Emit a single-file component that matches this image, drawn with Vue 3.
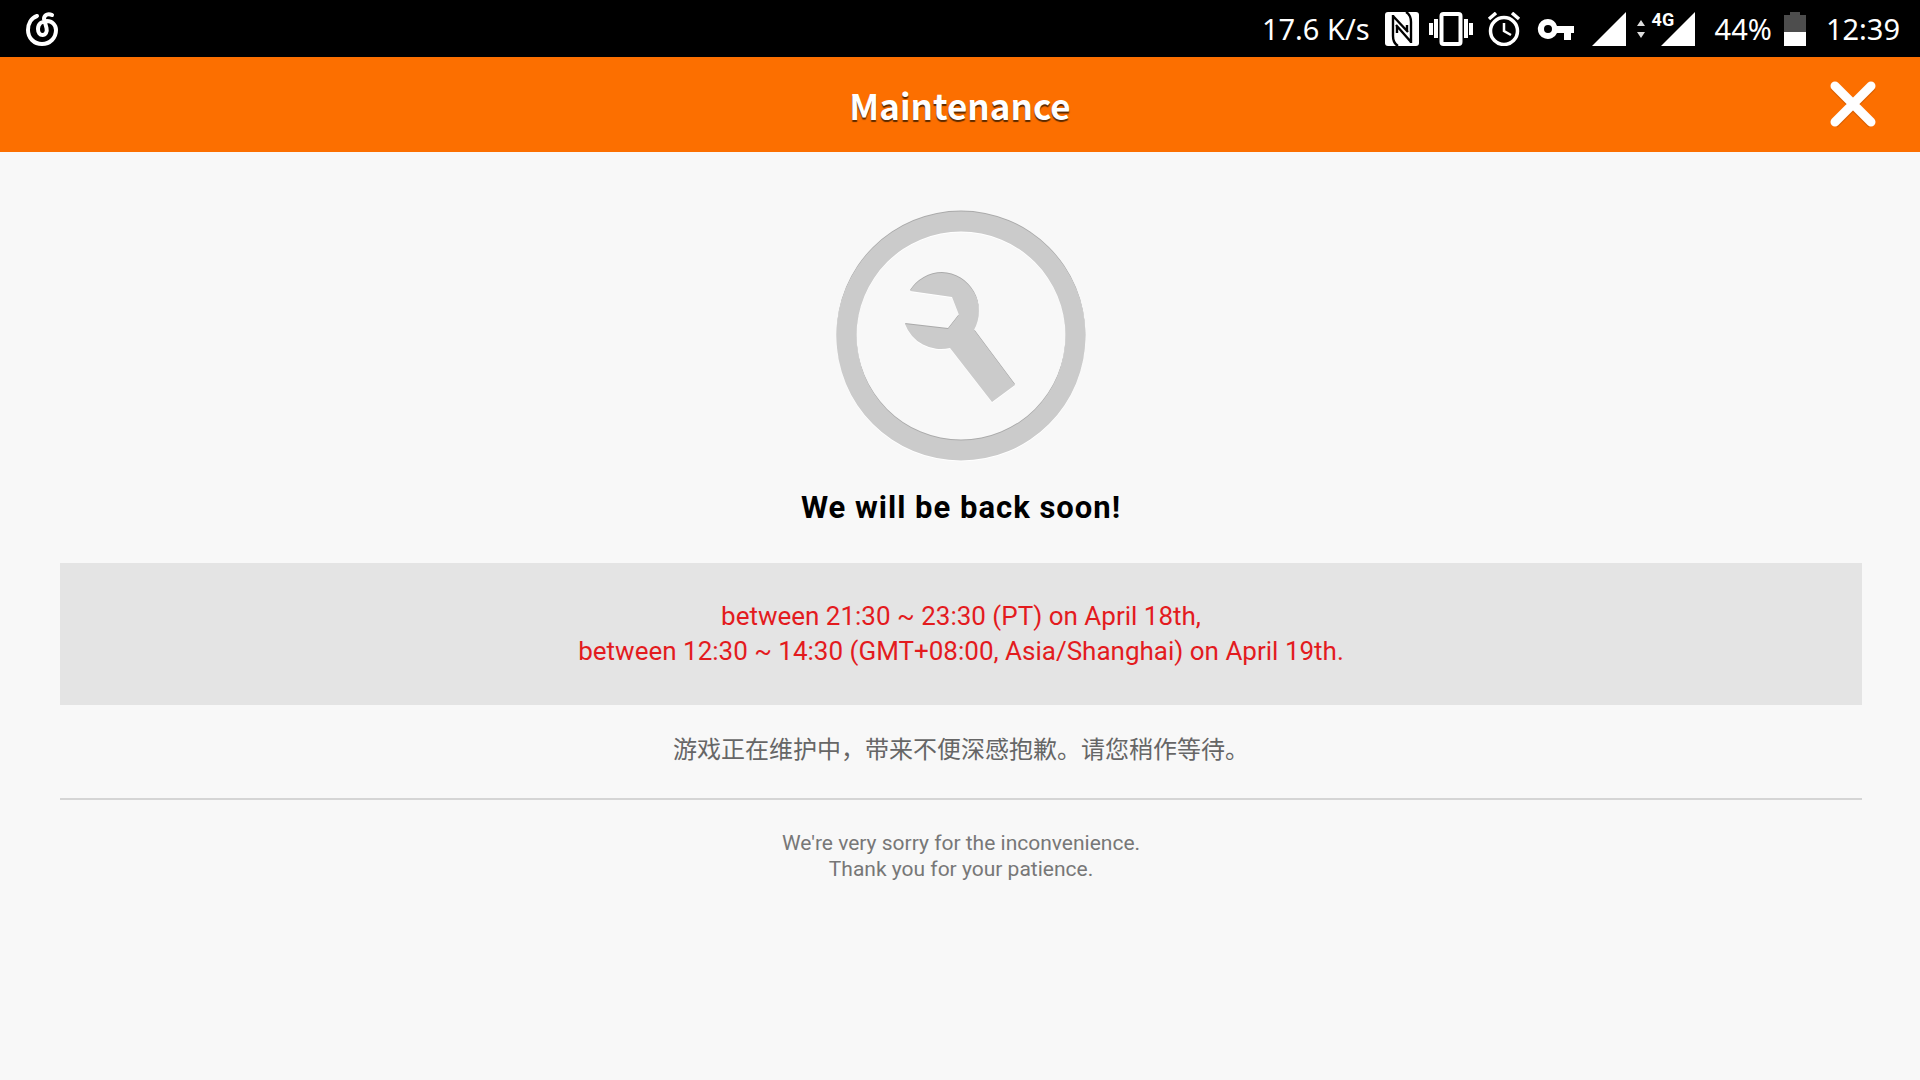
<script setup>
const notice = [
  'between 21:30 ~ 23:30 (PT) on April 18th,',
  'between 12:30 ~ 14:30 (GMT+08:00, Asia/Shanghai) on April 19th.',
]
</script>

<template>
  <div class="screen">
    <div class="status">
      <svg class="music" width="34" height="36" viewBox="0 0 34 36" fill="none" stroke="#fff" stroke-width="4" stroke-linecap="round">
        <path d="M11 5C5 7 2 13 2 19c0 8 6 14 14 14s14-6 14-14c0-5-4-9-9-9-5 0-9 3-9 8 0 4 2 6 4.500 6 3 0 5-3 4-7L18 8c0-4 4-6 8-4" />
      </svg>
      <div class="indicators">
        <span class="speed">17.6 K/s</span>
        <svg class="nfc" width="34" height="34" viewBox="0 0 34 34">
          <rect width="34" height="34" rx="3" fill="#fff" />
          <path d="M8 3v21q0 7 5 10M26 31V10q0-7-5-10M8 4l15 16M11 13l15 17M12 14v7M22 19v-6" fill="none" stroke="#000" stroke-width="2.400" />
        </svg>
        <svg class="vibrate" width="44" height="34" viewBox="0 0 44 34">
          <rect x="12.500" y="2" width="19" height="30" rx="2" fill="none" stroke="#fff" stroke-width="4" />
          <path d="M0 11h4v12H0zM5 7h4v19H5zM35 7h4v19h-4zM40 11h4v12h-4z" fill="#fff" />
        </svg>
        <svg class="alarm" width="34" height="34" viewBox="0 0 34 34" fill="none" stroke="#fff">
          <circle cx="17" cy="19" r="13.500" stroke-width="3.500" />
          <path d="M2 7l7-6M32 7l-7-6" stroke-width="3.500" />
          <path d="M17 11v8l7 4" stroke-width="2.500" />
        </svg>
        <svg class="key" width="38" height="22" viewBox="0 0 38 22">
          <path fill-rule="evenodd" fill="#fff" d="M11 1a10 10 0 1 0 9 14h7v7h7v-7h3V8H20A10 10 0 0 0 11 1zm0 6a4 4 0 1 1 0 8 4 4 0 0 1 0-8z" />
        </svg>
        <svg class="signal" width="34" height="34" viewBox="0 0 34 34"><path d="M34 0v34H0z" fill="#fff" /></svg>
        <svg class="updown" width="8" height="18" viewBox="0 0 8 18"><path d="M4 0l4 6H0zM4 18l4-6H0z" fill="#ddd" /></svg>
        <span class="mobile">
          <svg width="34" height="34" viewBox="0 0 34 34"><path d="M34 0v34H0z" fill="#fff" /></svg>
          <span class="network">4G</span>
        </span>
        <span class="percent">44%</span>
        <svg class="battery" width="22" height="34" viewBox="0 0 22 34">
          <path d="M6 0h10v3h6v17H0V3h6z" fill="#4d4d4d" />
          <path d="M0 20h22v14H0z" fill="#fff" />
        </svg>
        <span class="clock">12:39</span>
      </div>
    </div>

    <header class="header">
      <h1>Maintenance</h1>
      <button class="close" type="button" aria-label="Close">
        <svg width="48" height="50" viewBox="0 0 48 50" fill="none" stroke-width="10" stroke-linejoin="round">
          <path d="M4 6l38 38M42 6L4 44" stroke="#c65500" stroke-opacity=".6" />
          <path d="M5 6l36 36M41 6L5 42" stroke="#fff" stroke-linecap="round" stroke-width="9" />
        </svg>
      </button>
    </header>

    <main class="content">
      <svg class="wrench" width="252" height="252" viewBox="0 0 252 252">
        <defs>
          <g id="emblem">
            <path fill-rule="evenodd" d="M126 1.500a124.500 124.500 0 1 0 0 249 124.500 124.500 0 0 0 0-249zm0 20a104.500 104.500 0 1 1 0 209 104.500 104.500 0 0 1 0-209z" />
            <path d="M75 81A38.300 38.300 0 0 1 107 63 38.300 38.300 0 0 1 139 120L180 175 157 192 115 138A38.300 38.300 0 0 1 70 114L113 119 124 105 117 87z" />
          </g>
        </defs>
        <use href="#emblem" fill="#aaa" transform="translate(0 -1)" />
        <use href="#emblem" fill="#fff" transform="translate(0 1)" />
        <use href="#emblem" fill="#cbcbcb" />
      </svg>
      <h2>We will be back soon!</h2>
      <section class="notice">
        <p v-for="line in notice" :key="line">{{ line }}</p>
      </section>
      <p class="message" lang="zh-CN">游戏正在维护中，带来不便深感抱歉。请您稍作等待。</p>
      <hr />
      <p class="sorry">We're very sorry for the inconvenience.<br />Thank you for your patience.</p>
    </main>
  </div>
</template>

<style>
body {
  background: #f8f8f8;
}
</style>

<style scoped>
.screen {
  min-height: 100vh;
  background: #f8f8f8;
  font-family: Roboto, "Noto Sans CJK SC", sans-serif;
}
h1, h2, p {
  margin: 0;
}
svg {
  display: block;
  flex: none;
}
.status {
  display: flex;
  align-items: center;
  justify-content: space-between;
  height: 57px;
  padding: 0 20px 0 26px;
  background: #000;
  color: #fff;
  font-family: "Noto Sans", sans-serif;
  font-size: 29px;
  line-height: 36px;
}
.indicators {
  display: flex;
  align-items: center;
}
.speed { margin-right: 15px; }
.nfc { margin-right: 10px; }
.vibrate { margin-right: 14px; }
.alarm { margin-right: 16px; }
.key { margin-right: 17px; }
.signal { margin-right: 11px; }
.updown { margin-right: 16px; }
.mobile {
  position: relative;
  margin-right: 20px;
}
.network {
  position: absolute;
  left: -9px;
  top: -1px;
  font: bold 18px/18px Roboto, sans-serif;
}
.percent { margin-right: 12px; }
.battery { margin-right: 20px; }
.header {
  display: grid;
  grid-template-columns: 1fr auto 1fr;
  align-items: center;
  height: 95px;
  padding: 0 42px;
  background: #fc6f00;
}
h1 {
  grid-column: 2;
  color: #fff;
  font: bold 35px/48px "Noto Sans CJK SC", sans-serif;
  text-shadow: 0 2px 1px #5a2a00;
}
.close {
  justify-self: end;
  padding: 0;
  border: 0;
  background: none;
  cursor: pointer;
}
.content {
  padding: 58px 58px 58px 60px;
  text-align: center;
}
.wrench {
  margin: 0 auto 28px;
}
h2 {
  margin-bottom: 37px;
  color: #000;
  font-size: 31px;
  line-height: 36px;
  letter-spacing: 1px;
}
.notice {
  padding: 36px 0;
  background: #e4e4e4;
  color: #e31b1e;
  font-size: 26px;
  line-height: 35px;
}
.message {
  margin: 27px 0 30px;
  color: #666;
  font-size: 24px;
  line-height: 36px;
}
hr {
  height: 2px;
  margin: 0 0 30px;
  border: 0;
  background: #d5d5d5;
}
.sorry {
  color: #777;
  font-size: 21px;
  line-height: 26px;
}
</style>
